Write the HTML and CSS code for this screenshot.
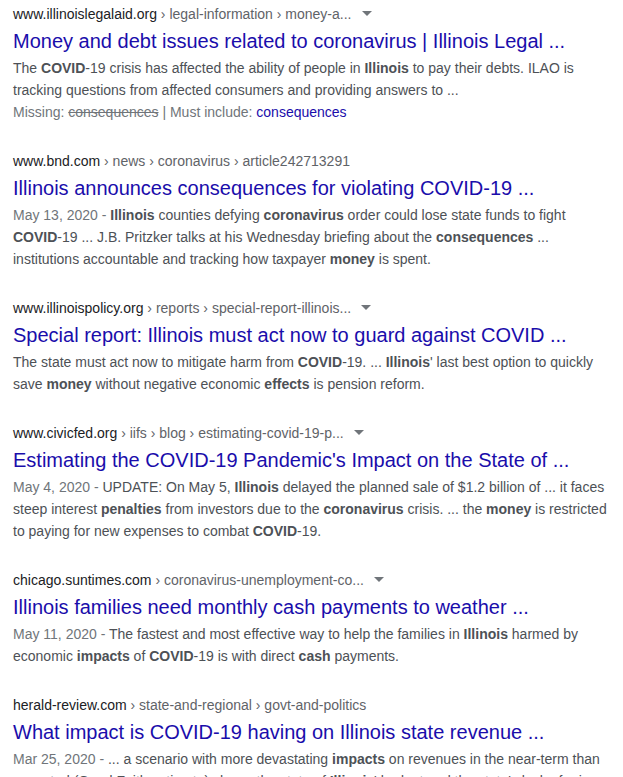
FILE: index.html
```html
<!DOCTYPE html>
<html>
<head>
<meta charset="utf-8">
<link rel="stylesheet" href="styles.css">
</head>
<body>
<div class="results">
  <div class="result">
    <div class="cite"><span class="domain">www.illinoislegalaid.org</span><span class="crumbs"> › legal-information › money-a...</span><span class="caret"></span></div>
    <h3 class="title">Money and debt issues related to coronavirus | Illinois Legal ...</h3>
    <div class="snippet">The <b>COVID</b>-19 crisis has affected the ability of people in <b>Illinois</b> to pay their debts. ILAO is tracking questions from affected consumers and providing answers to ...</div>
    <div class="missing">Missing: <s>consequences</s> | Must include: <span class="must">consequences</span></div>
  </div>
  <div class="result">
    <div class="cite"><span class="domain">www.bnd.com</span><span class="crumbs"> › news › coronavirus › article242713291</span></div>
    <h3 class="title">Illinois announces consequences for violating COVID-19 ...</h3>
    <div class="snippet"><span class="date">May 13, 2020 - </span><b>Illinois</b> counties defying <b>coronavirus</b> order could lose state funds to fight <b>COVID</b>-19 ... J.B. Pritzker talks at his Wednesday briefing about the <b>consequences</b> ... institutions accountable and tracking how taxpayer <b>money</b> is spent.</div>
  </div>
  <div class="result">
    <div class="cite"><span class="domain">www.illinoispolicy.org</span><span class="crumbs"> › reports › special-report-illinois...</span><span class="caret"></span></div>
    <h3 class="title">Special report: Illinois must act now to guard against COVID ...</h3>
    <div class="snippet">The state must act now to mitigate harm from <b>COVID</b>-19. ... <b>Illinois</b>' last best option to quickly save <b>money</b> without negative economic <b>effects</b> is pension reform.</div>
  </div>
  <div class="result">
    <div class="cite"><span class="domain">www.civicfed.org</span><span class="crumbs"> › iifs › blog › estimating-covid-19-p...</span><span class="caret"></span></div>
    <h3 class="title">Estimating the COVID-19 Pandemic's Impact on the State of ...</h3>
    <div class="snippet"><span class="date">May 4, 2020 - </span>UPDATE: On May 5, <b>Illinois</b> delayed the planned sale of $1.2 billion of ... it faces steep interest <b>penalties</b> from investors due to the <b>coronavirus</b> crisis. ... the <b>money</b> is restricted to paying for new expenses to combat <b>COVID</b>-19.</div>
  </div>
  <div class="result">
    <div class="cite"><span class="domain">chicago.suntimes.com</span><span class="crumbs"> › coronavirus-unemployment-co...</span><span class="caret"></span></div>
    <h3 class="title">Illinois families need monthly cash payments to weather ...</h3>
    <div class="snippet"><span class="date">May 11, 2020 - </span>The fastest and most effective way to help the families in <b>Illinois</b> harmed by economic <b>impacts</b> of <b>COVID</b>-19 is with direct <b>cash</b> payments.</div>
  </div>
  <div class="result">
    <div class="cite"><span class="domain">herald-review.com</span><span class="crumbs"> › state-and-regional › govt-and-politics</span></div>
    <h3 class="title">What impact is COVID-19 having on Illinois state revenue ...</h3>
    <div class="snippet"><span class="date">Mar 25, 2020 - </span>... a scenario with more devastating <b>impacts</b> on revenues in the near-term than expected (Good Faith estimate) shows the state of <b>Illinois</b>' budget and the state's lack of rainy day funds.</div>
  </div>
</div>
</body>
</html>
```

FILE: styles.css
```css
html, body {
  margin: 0;
  padding: 0;
  background: #fff;
}
body {
  font-family: "Liberation Sans", Arial, sans-serif;
  padding: 4px 13px 0 13px;
  overflow: hidden;
  height: 777px;
  box-sizing: border-box;
}
.results {
  display: flex;
  flex-direction: column;
  gap: 28px;
  width: 600px;
}
.cite {
  font-size: 14px;
  line-height: 20px;
  color: #202124;
  white-space: nowrap;
}
.crumbs {
  color: #5f6368;
}
.caret {
  display: inline-block;
  width: 0;
  height: 0;
  border-left: 5px solid transparent;
  border-right: 5px solid transparent;
  border-top: 5px solid #70757a;
  margin-left: 10px;
  vertical-align: middle;
  position: relative;
  top: -2px;
}
.title {
  margin: 0;
  padding-top: 4px;
  margin-bottom: 3px;
  font-size: 20px;
  line-height: 26px;
  font-weight: normal;
  color: #1a0dab;
  white-space: nowrap;
}
.snippet, .missing {
  font-size: 14px;
  line-height: 22px;
  color: #4d5156;
}
.snippet b {
  color: #4d5156;
  font-weight: bold;
}
.date {
  color: #70757a;
}
.missing {
  color: #70757a;
}
.must {
  color: #1a0dab;
}
```
